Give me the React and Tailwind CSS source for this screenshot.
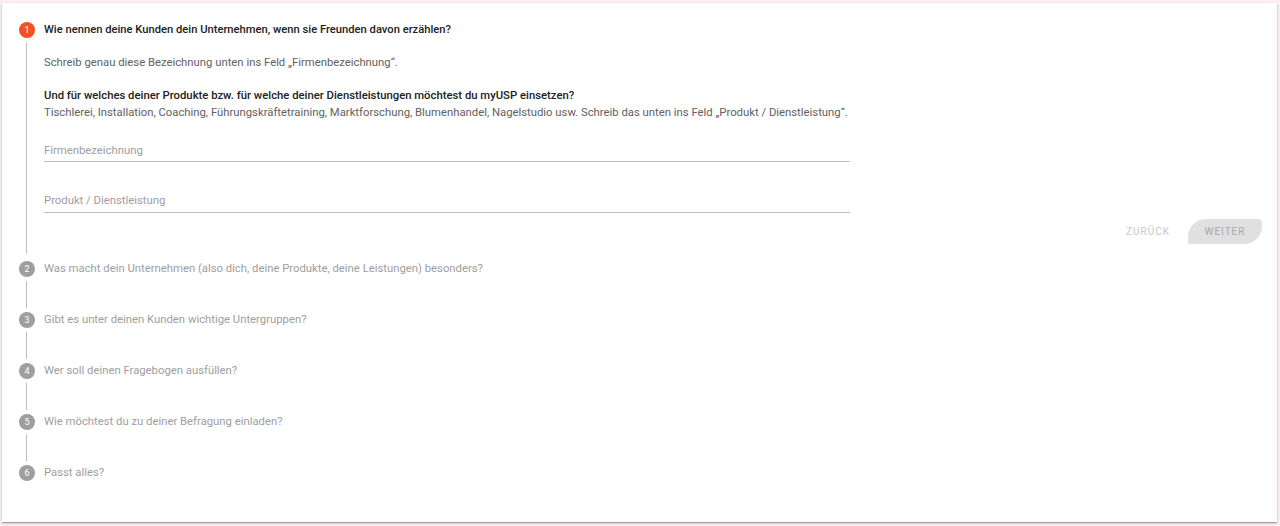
import React from "react";

function Circle({ n, active }) {
  return (
    <div
      className={
        "w-[16px] h-[16px] rounded-full flex items-center justify-center text-white text-[9px] leading-none shrink-0 " +
        (active ? "bg-[#f4511e]" : "bg-[#9e9e9e]")
      }
    >
      {n}
    </div>
  );
}

function StepHeader({ n, title, active }) {
  return (
    <div className="flex items-center h-[16px] gap-[9px]">
      <Circle n={n} active={active} />
      <span
        className={
          "leading-[16px] " +
          (active ? "text-[11.2px] font-medium text-[#212121]" : "text-[11.3px] text-[#9e9e9e]")
        }
      >
        {title}
      </span>
    </div>
  );
}

function Connector() {
  return (
    <div className="h-[35px] ml-[7px] py-[4px]">
      <div className="h-full border-l border-[#bdbdbd]" />
    </div>
  );
}

function Field({ label, className }) {
  return (
    <div className={"w-[806px] border-b border-[#bdbdbd] " + className}>
      <div className="text-[11.3px] leading-[17px] text-[#9e9e9e]">{label}</div>
    </div>
  );
}

export default function App() {
  const rest = [
    "Was macht dein Unternehmen (also dich, deine Produkte, deine Leistungen) besonders?",
    "Gibt es unter deinen Kunden wichtige Untergruppen?",
    "Wer soll deinen Fragebogen ausfüllen?",
    "Wie möchtest du zu deiner Befragung einladen?",
    "Passt alles?",
  ];
  return (
    <div
      className="min-h-screen bg-[#fcf0f1] pt-[3px] pl-[2px]"
      style={{ fontFamily: "Roboto, 'Liberation Sans', Arial, sans-serif" }}
    >
      <div className="w-[1275px] h-[519px] bg-white shadow-[0_1px_3px_rgba(0,0,0,0.2),0_1px_1px_rgba(0,0,0,0.14),0_2px_1px_-1px_rgba(0,0,0,0.12)] pl-[17px] pr-[15px] pt-[19px]">
        <StepHeader
          n={1}
          active
          title="Wie nennen deine Kunden dein Unternehmen, wenn sie Freunden davon erzählen?"
        />
        <div className="ml-[7px] mt-[4px] border-l border-[#bdbdbd] pl-[17px] pt-[12px] pb-[10px]">
          <p className="text-[11.3px] leading-[17px] text-[#616161]">
            Schreib genau diese Bezeichnung unten ins Feld „Firmenbezeichnung“.
          </p>
          <div className="mt-[16px] text-[11.3px] leading-[17px]">
            <p className="font-medium text-[#212121]">
              Und für welches deiner Produkte bzw. für welche deiner Dienstleistungen möchtest du myUSP einsetzen?
            </p>
            <p className="text-[#616161]">
              Tischlerei, Installation, Coaching, Führungskräftetraining, Marktforschung, Blumenhandel, Nagelstudio usw. Schreib das unten ins Feld „Produkt / Dienstleistung“.
            </p>
          </div>
          <Field label="Firmenbezeichnung" className="mt-[21px] pb-[2px]" />
          <Field label="Produkt / Dienstleistung" className="mt-[30px] pb-[3px]" />
          <div className="mt-[6px] flex justify-end items-center gap-[18px]">
            <span className="text-[10px] tracking-[1px] text-[#c8c8c8] uppercase">Zurück</span>
            <div className="h-[25px] w-[74px] bg-[#e0e0e0] rounded-tl-[18px] rounded-br-[18px] rounded-tr-[4px] rounded-bl-[2px] flex items-center justify-center text-[10px] tracking-[1px] text-[#a8a8a8] uppercase">
              Weiter
            </div>
          </div>
        </div>
        <div className="mt-[7px]">
          {rest.map((t, i) => (
            <div key={i}>
              <StepHeader n={i + 2} title={t} />
              {i < rest.length - 1 && <Connector />}
            </div>
          ))}
        </div>
      </div>
    </div>
  );
}
